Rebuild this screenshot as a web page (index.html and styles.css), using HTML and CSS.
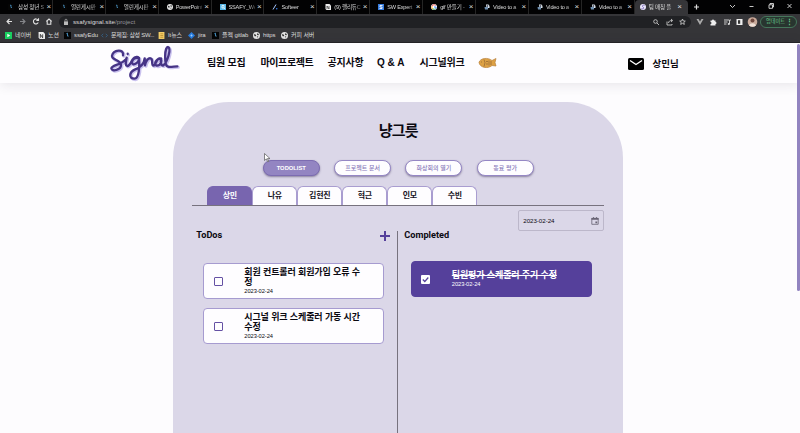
FILE: index.html
```html
<!DOCTYPE html>
<html lang="ko">
<head>
<meta charset="utf-8">
<title>Signal</title>
<link rel="stylesheet" href="styles.css">
</head>
<body>
<svg class="defs" width="0" height="0">
  <symbol id="globe" viewBox="0 0 12 12"><circle cx="6" cy="6" r="6" fill="#e4e4e4"/><path d="M2 3.5l3 1 .5 2-2 1L2 6zM7 2l3 1.5-.5 2L7 5zM6.5 8l2.500-1L8 10z" fill="#333"/></symbol>
  <symbol id="doc" viewBox="0 0 12 12"><path d="M1 0h8l3 3v9H3l-2-2z" fill="#eee"/><path d="M4 10V4l4 6V4" fill="none" stroke="#222" stroke-width="1.300"/></symbol>
  <symbol id="bit" viewBox="0 0 12 12"><path fill="#050505" d="M0 0h12v12H0z"/><path d="M4 3l2-1v5h2" fill="none" stroke="#4e9bd0" stroke-width="1.500"/></symbol>
  <symbol id="video" viewBox="0 0 12 12"><path d="M4 1h5l2 3v4H5z" fill="#dde6ef"/><path d="M1 6h7v5H2z" fill="#6f8fb0"/><circle cx="7" cy="4" r="1.500" fill="#223"/></symbol>
</svg>
<header class="browser">
  <div class="tabs">
    <div class="btab"><svg><use href="#bit"/></svg><span>삼성 청년 S</span><i>×</i></div>
    <div class="btab"><svg><use href="#bit"/></svg><span>열린게시판</span><i>×</i></div>
    <div class="btab"><svg><use href="#bit"/></svg><span>열린게시판</span><i>×</i></div>
    <div class="btab"><svg><use href="#globe"/></svg><span>PowerPoint</span><i>×</i></div>
    <div class="btab"><svg viewBox="0 0 12 12"><path fill="#58b7e6" d="M0 0h12v12H0z"/><path d="M4 3h4v5l2 2M4 3v5h4" stroke="#fff" stroke-width="1.500" fill="none"/></svg><span>SSAFY_Wel</span><i>×</i></div>
    <div class="btab"><svg viewBox="0 0 12 12"><path d="M2 11L8 1" stroke="#a8c8ff" stroke-width="2"/><circle cx="9.500" cy="9.500" r="1.500" fill="#3686ff"/></svg><span class="short">Softeer</span><i>×</i></div>
    <div class="btab"><svg><use href="#doc"/></svg><span>(9) 랠리듀C</span><i>×</i></div>
    <div class="btab"><svg viewBox="0 0 12 12"><path fill="#377de0" d="M0 0h12v12H0z"/><path d="M9 3H4v3h4v3H3" stroke="#fff" stroke-width="1.700" fill="none"/></svg><span>SW Expert</span><i>×</i></div>
    <div class="btab"><svg viewBox="0 0 12 12"><circle cx="6" cy="6" r="6" fill="#fff"/><path d="M9 3a4 4 0 0 0-7 2" stroke="#e44" stroke-width="2" fill="none"/><path d="M2 5a4 4 0 0 0 2 5" stroke="#fb3" stroke-width="2" fill="none"/><path d="M4 10a4 4 0 0 0 5-1" stroke="#3a5" stroke-width="2" fill="none"/><path d="M6 6h4v3" stroke="#48f" stroke-width="2" fill="none"/></svg><span>gif 만들기 -</span><i>×</i></div>
    <div class="btab"><svg><use href="#video"/></svg><span>Video to a</span><i>×</i></div>
    <div class="btab"><svg><use href="#video"/></svg><span>Video to a</span><i>×</i></div>
    <div class="btab"><svg><use href="#video"/></svg><span>Video to a</span><i>×</i></div>
    <div class="btab current"><svg viewBox="0 0 12 12"><circle cx="6" cy="6" r="6" fill="#e9e5fa"/><path d="M9 3C6 1 3 4 6 6s1 5-3 3" stroke="#6553a8" stroke-width="1.500" fill="none"/></svg><span>팀 매칭 플</span><i>×</i></div>
    <svg class="window-buttons" viewBox="0 0 111 14"><g fill="none" stroke="#ddd" stroke-width=".9"><path d="M6 7h5M8.500 4.500v5" stroke-width="1.200"/><path d="M42 5l2.500 2.500L47 5M61.500 6.500h4M81 4.800h3.500v3.500H81zM82 4.800V3.500h3.500V7h-1M99.500 4l4 4M103.500 4l-4 4"/></g></svg>
  </div>
  <div class="toolbar">
    <svg class="nav-icons" viewBox="0 0 58 15"><g fill="none" stroke="#e0e0e0" stroke-width="1.100"><path d="M12 7.500H7M9.500 5L7 7.500 9.500 10"/><path stroke="#85868a" d="M20 7.500h5M22.500 5L25 7.500 22.500 10"/><path d="M38 6a2.500 2.500 0 1 0 .2 2.500M38.500 4.300v2.200h-2.200"/><path d="M46.300 7.500L49 5l2.700 2.500M47.200 7v3.200h3.600V7"/></g></svg>
    <div class="address">
      <svg viewBox="0 0 6 8"><path fill="#bbb" d="M1 3.500h4V7H1z"/><path d="M2 4V2.200a1 1 0 0 1 2 0V4" fill="none" stroke="#bbb" stroke-width=".7"/></svg>
      <span>ssafysignal.site<em>/project</em></span>
      <svg class="address-icons" viewBox="0 0 40 12"><g fill="none" stroke="#c6c6c6" stroke-width=".9"><circle cx="4.500" cy="5.500" r="1.800"/><path d="M6 7l2 2M16 5.500v3.500h5V8M17.500 7c.3-2 1.500-2.500 3.500-2.500M20 3l1.700 1.500L20 6"/><path d="M31.500 3l.8 2 2 .1-1.500 1.300.5 2-1.800-1.100-1.800 1.100.5-2-1.500-1.300 2-.1z"/></g></svg>
    </div>
    <svg class="extensions" viewBox="0 0 68 14"><path fill="#aaa" d="M5 4h2l1.500 2.500L10 4h2L8.500 10z"/><path fill="#eee" d="M19 5.500h1.500a1 1 0 0 1 2 0H24V7a1 1 0 0 1 0 2v1.500h-5V9a1 1 0 0 0 0-2z"/><path d="M32.500 5h5M32.500 7h3.500M32.500 9h2.500M38 9V5h1.500" stroke="#ddd" stroke-width=".9" fill="none"/><circle cx="37.300" cy="9" r="1.100" fill="#ddd"/><path fill="#eee" d="M45 4h6v6h-6z"/><path fill="#333" d="M46.500 5.200h2.200v3.600h-2.200z"/><circle cx="61" cy="7" r="4.800" fill="#c9aa9b"/><circle cx="61" cy="5.500" r="2" fill="#70483e"/><path d="M57.600 10.400c1.200-3 5.600-3 6.800 0a4.800 4.800 0 0 1-6.800 0" fill="#f0e1d8"/></svg>
    <button class="update">업데이트<b>⋮</b></button>
  </div>
  <nav class="bookmarks">
    <a><svg viewBox="0 0 12 12"><path fill="#19cf60" d="M0 0h12v12H0z"/><path fill="#fff" d="M4 3l5 3-5 3z"/></svg>네이버</a>
    <a><svg><use href="#doc"/></svg>노션</a>
    <a><svg><use href="#bit"/></svg>ssafyEdu</a>
    <a><svg viewBox="0 0 12 12"><path d="M4 3L1 6l3 3M8 3l3 3-3 3" stroke="#376c99" stroke-width="1.300" fill="none"/></svg>문제집: 삼성 SW...</a>
    <a><svg viewBox="0 0 12 12"><path fill="#f4ce69" d="M1 0h10v12H1z"/><path stroke="#a57719" d="M4 3h5M4 6h5M4 9h5"/></svg>It뉴스</a>
    <a><svg viewBox="0 0 12 12"><path fill="#287ddf" d="M6 0l6 6-6 6-6-6z"/><path fill="#9cccff" d="M6 4l2 2-2 2-2-2z"/></svg>jira</a>
    <a><svg><use href="#bit"/></svg>플젝 gitlab</a>
    <a><svg><use href="#globe"/></svg>https</a>
    <a><svg><use href="#globe"/></svg>커피 서버</a>
  </nav>
</header>
<div class="site">
  <header class="site-header">
    <svg class="logo" viewBox="4 0 222 123">
      <defs><path id="signature" d="M49 37C53 16 20 20 16 38C14 52 42 50 43 66C43 80 16 88 14 76C15 66 42 66 56 50M60 44C58 56 54 68 62 69C70 69 74 54 79 48C86 38 97 42 97 48C97 58 76 72 76 58C76 50 84 42 97 45C99 70 98 106 83 107C66 107 67 88 84 80C100 74 112 62 114 46L115 67C118 53 125 44 132 46C141 48 132 68 141 68C148 66 148 48 158 46C170 48 162 69 150 68C140 64 148 46 163 46C161 60 164 70 170 67C182 58 195 16 184 12C173 12 172 68 184 71C191 73 203 70 212 70M63 32v1"/></defs>
      <g fill="none" stroke-linecap="round" stroke-linejoin="round"><use href="#signature" transform="translate(3 3)" stroke="#c9c1ee" stroke-width="9"/><use href="#signature" stroke="#463486" stroke-width="7"/></g>
    </svg>
    <nav class="site-nav"><a>팀원 모집</a><a>마이프로젝트</a><a>공지사항</a><a class="qa">Q &amp; A</a><a>시그널위크</a></nav>
    <svg class="fish" viewBox="0 0 19 12"><path d="M1 5.500C2 1 10 0 14 3.500L18 1.500l-1 4 1 3.500-4-.5C10 12 2 11 1 5.500z" fill="#dda144" stroke="#b9803a" stroke-width=".7"/><path d="M6 2.500q2 3 0 7M8 4.500h2M8 7h2M11 3.500v5M13 4v4M3 5h1" fill="none" stroke="#8f6334" stroke-width=".7"/></svg>
    <svg class="mail" viewBox="0 0 16 12"><rect width="16" height="12" rx="1.500"/><path d="M2 2.500l6 4 6-4" fill="none" stroke="#fff" stroke-width="1.400"/></svg>
    <span class="user">상민님</span>
  </header>
  <main class="panel">
    <h1>냥그릇</h1>
    <div class="pills"><button class="active">TODOLIST</button><button>프로젝트 문서</button><button>화상회의 열기</button><button>동료 평가</button></div>
    <div class="people"><button class="active">상민</button><button>나유</button><button>김현진</button><button>혁근</button><button>인모</button><button>수빈</button></div>
    <div class="date"><span>2023-02-24</span><svg viewBox="0 0 8 8"><path d="M.8 1.300h6.400v6H.800z" fill="none" stroke="#686373" stroke-width=".8"/><path d="M.5 1h7v1.700h-7zM2 0h.8v2H2zM5.200 0H6v2h-.8zM4.400 4.500h1.800v1.800H4.400z" fill="#686373"/></svg></div>
    <div class="columns">
      <section class="todo">
        <h2>ToDos<svg viewBox="0 0 10 10"><path d="M5 0v10M0 5h10" stroke="#55409b" stroke-width="2"/></svg></h2>
        <article class="card"><i class="box"></i><div><h3>회원 컨트롤러 회원가입 오류 수<br>정</h3><time>2023-02-24</time></div></article>
        <article class="card second"><i class="box"></i><div><h3>시그널 위크 스케줄러 가동 시간<br>수정</h3><time>2023-02-24</time></div></article>
      </section>
      <section class="done">
        <h2>Completed</h2>
        <article class="card complete"><svg class="checked" viewBox="0 0 9 9"><rect width="9" height="9" rx="1" fill="#fff"/><path d="M1.800 4.500l2 2 3.500-4" fill="none" stroke="#55409b" stroke-width="1.200"/></svg><div><h3>팀원평가 스케줄러 주기 수정</h3><time>2023-02-24</time></div></article>
      </section>
    </div>
  </main>
  <div class="scrollbar"></div>
</div>
<svg class="cursor" viewBox="0 0 7 10"><path d="M.5.500v7l1.800-1.600 1.500 3 1-.5-1.400-2.800H6z" fill="#fff" stroke="#555" stroke-width=".7"/></svg>
</body>
</html>
```
FILE: styles.css
```css
* { box-sizing: border-box; }
body { margin: 0; width: 800px; height: 433px; overflow: hidden; font-family: "Liberation Sans", "Noto Sans CJK KR", sans-serif; }
svg { display: block; flex: none; }
.defs { position: absolute; }
h1, h2, h3 { margin: 0; }
button { font: inherit; padding: 0; border: 0; }
i, em { font-style: normal; }

.browser { height: 43px; background: #353538; color: #ddd; border-bottom: 1px solid #242426; }
.tabs { height: 14px; background: #020203; display: flex; }
.btab { width: 52.9px; height: 14px; flex: none; display: flex; align-items: center; padding-left: 8px; font-size: 5.6px; border-right: 1px solid #252525; }
.btab:nth-child(n+4) { padding-left: 8px; }
.btab svg { width: 6px; height: 6px; margin-right: 4px; }
.btab:nth-child(n+4) svg { margin-right: 3px; }
.btab span { width: 26.5px; flex: none; white-space: nowrap; line-height: 10px; letter-spacing: -.2px; -webkit-mask-image: linear-gradient(90deg, #000 75%, rgba(0, 0, 0, .25)); mask-image: linear-gradient(90deg, #000 75%, rgba(0, 0, 0, .25)); }
.btab .short { letter-spacing: -.1px; }
.btab i { font-size: 8px; line-height: 8px; margin-left: 2px; }
.btab.current { width: 53.2px; background: #353538; border: 0; border-radius: 4px 4px 0 0; padding-left: 5px; }
.window-buttons { width: 111px; height: 14px; }
.toolbar { height: 15px; display: flex; align-items: center; }
.nav-icons { width: 58px; height: 15px; }
.address { flex: 1; margin-left: 1px; height: 12px; border-radius: 6px; background: #202124; display: flex; align-items: center; padding-left: 4px; }
.address > svg:first-child { width: 6px; height: 8px; }
.address span { margin-left: 4px; font-size: 6.200px; flex: 1; }
.address em { color: #92939a; }
.address-icons { width: 40px; height: 12px; }
.extensions { width: 69px; height: 14px; }
.update { width: 37px; height: 12px; margin-right: 3px; border: 1px solid #45765b; border-radius: 6px; background: #28352f; color: #69c98c; font-size: 5.200px; line-height: 9px; display: flex; align-items: center; justify-content: space-between; padding: 0 3px 0 5px; }
.update b { font-size: 7px; }
.bookmarks { height: 12px; display: grid; grid-template-columns: 33px 26px 37px 57px 30px 24px 41px 28px 40px; padding-left: 5px; align-items: center; font-size: 6px; }
.bookmarks a { display: flex; align-items: center; white-space: nowrap; line-height: 10px; letter-spacing: -.1px; }
.bookmarks a:nth-child(4) { letter-spacing: -.3px; }
.bookmarks svg { width: 7px; height: 7px; margin-right: 3px; }

.site { height: 390px; background: #fdfcfe; position: relative; font-weight: 700; color: #0b0911; }
.site-header { height: 40px; background: #fefdff; box-shadow: 0 1px 12px rgba(40, 35, 55, .12); display: flex; align-items: center; padding-left: 108px; }
.logo { width: 74px; height: 41px; }
.site-nav { display: grid; grid-template-columns: 53.5px 67px 49.5px 42.5px 58px; padding-left: 25px; font-size: 10px; letter-spacing: -.2px; line-height: 14px; white-space: nowrap; }
.site-nav a:nth-child(2) { letter-spacing: -.4px; }
.site-nav .qa { letter-spacing: 0; }
.fish { width: 19px; height: 12px; }
.mail { width: 16px; height: 12px; margin-left: 131px; margin-top: 1px; }
.user { margin-left: 9px; font-size: 9.500px; letter-spacing: 0; }
.scrollbar { position: absolute; right: 0; top: 1px; width: 3px; height: 247px; background: #9284c0; border-radius: 2px; }

.panel { width: 450px; height: 331px; margin: 19px 0 0 173.3px; border-radius: 56px 56px 0 0; background: #dbd7e8; padding: 19px 19px 0; }
h1 { font-size: 15px; line-height: 20px; text-align: center; letter-spacing: -.8px; }
.pills { display: flex; gap: 14.3px; margin: 19px 0 0 70.500px; }
.pills button { width: 57px; height: 16px; border: 1px solid #9587c5; border-radius: 8px; background: #fefdff; color: #8779ba; font-size: 6px; line-height: 13px; font-weight: 500; box-shadow: 0 1px 2px rgba(60, 45, 90, .5); }
.pills .active { background: #9385c2; border-color: #7c6cb1; color: #fff; font-weight: 700; font-size: 5.800px; }
.people { height: 20px; margin-top: 10px; padding-left: 15px; display: flex; border-bottom: 1px solid #77727e; align-items: flex-end; }
.people button { width: 45px; height: 19px; border: 1px solid #a99dd0; border-bottom: 0; border-radius: 6px 6px 0 0; background: #fefdff; font-size: 8px; line-height: 16px; letter-spacing: -.2px; color: #16131c; }
.people .active { background: #7865af; border-color: #7865af; color: #fff; }
.date { width: 86px; height: 21px; margin: 4px 0 0 auto; border: 1px solid #bcb7ca; border-radius: 2px; display: flex; align-items: center; justify-content: space-between; padding: 0 4px; font-size: 6.200px; font-weight: 500; letter-spacing: -.05px; }
.date svg { width: 8px; height: 8px; }
.columns { display: flex; height: 202px; }
.todo { width: 206.500px; border-right: 1px solid #77727e; padding: 0 13px 0 11px; }
.done { flex: 1; padding: 0 12px 0 13px; }
h2 { height: 12px; margin: -2px -6px 0 -7px; display: flex; align-items: center; justify-content: space-between; font-family: Roboto, sans-serif; font-size: 9.200px; line-height: 12px; }
h2 svg { width: 10px; height: 10px; margin-top: 2px; }
.card { height: 36px; width: 181px; margin-top: 22px; border: 1px solid #a69bd0; border-radius: 4px; background: #fefdff; display: flex; align-items: center; }
.card.second { margin-top: 9px; }
.box { width: 9px; height: 9px; border: 1px solid #6551a4; border-radius: 1px; margin: 0 21.500px 0 9.500px; flex: none; }
.card h3 { font-size: 9px; line-height: 10px; letter-spacing: -.12px; white-space: nowrap; }
.card time { display: block; font-size: 5.700px; line-height: 8px; font-weight: 400; letter-spacing: -.05px; }
.card.complete { margin-top: 20px; background: #55409b; border-color: #55409b; color: #fff; }
.checked { width: 9px; height: 9px; margin: 0 21.500px 0 9px; }
.complete h3 { text-decoration: line-through; }
.cursor { position: absolute; left: 264px; top: 153px; width: 7px; height: 10px; }
```
